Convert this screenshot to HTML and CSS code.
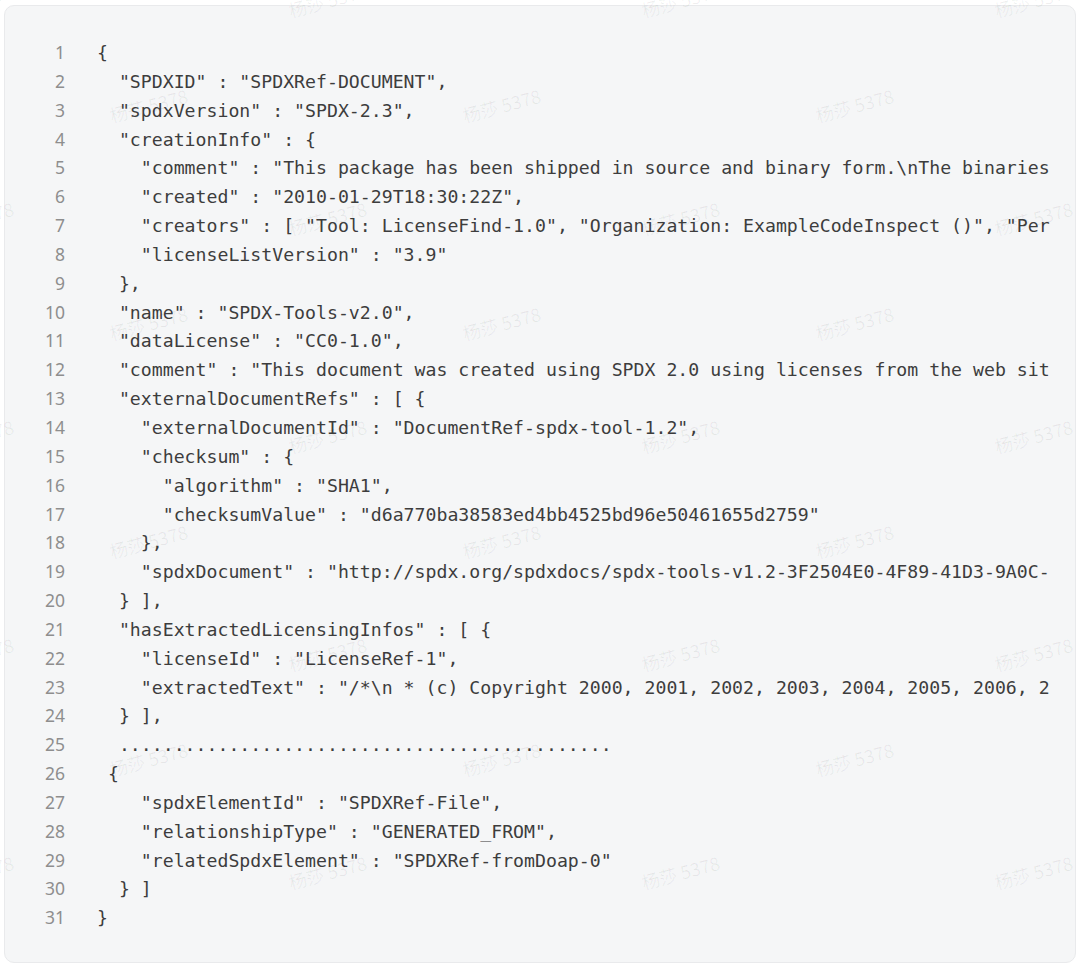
FILE: index.html
```html
<!DOCTYPE html>
<html lang="zh-CN">
<head>
<meta charset="utf-8">
<title>SPDX JSON</title>
<link rel="stylesheet" href="styles.css">
</head>
<body>
<div class="code-block">
  <div class="line"><span class="ln">1</span><span class="code">{</span></div>
  <div class="line"><span class="ln">2</span><span class="code">  "SPDXID" : "SPDXRef-DOCUMENT",</span></div>
  <div class="line"><span class="ln">3</span><span class="code">  "spdxVersion" : "SPDX-2.3",</span></div>
  <div class="line"><span class="ln">4</span><span class="code">  "creationInfo" : {</span></div>
  <div class="line"><span class="ln">5</span><span class="code">    "comment" : "This package has been shipped in source and binary form.\nThe binaries</span></div>
  <div class="line"><span class="ln">6</span><span class="code">    "created" : "2010-01-29T18:30:22Z",</span></div>
  <div class="line"><span class="ln">7</span><span class="code">    "creators" : [ "Tool: LicenseFind-1.0", "Organization: ExampleCodeInspect ()", "Per</span></div>
  <div class="line"><span class="ln">8</span><span class="code">    "licenseListVersion" : "3.9"</span></div>
  <div class="line"><span class="ln">9</span><span class="code">  },</span></div>
  <div class="line"><span class="ln">10</span><span class="code">  "name" : "SPDX-Tools-v2.0",</span></div>
  <div class="line"><span class="ln">11</span><span class="code">  "dataLicense" : "CC0-1.0",</span></div>
  <div class="line"><span class="ln">12</span><span class="code">  "comment" : "This document was created using SPDX 2.0 using licenses from the web sit</span></div>
  <div class="line"><span class="ln">13</span><span class="code">  "externalDocumentRefs" : [ {</span></div>
  <div class="line"><span class="ln">14</span><span class="code">    "externalDocumentId" : "DocumentRef-spdx-tool-1.2",</span></div>
  <div class="line"><span class="ln">15</span><span class="code">    "checksum" : {</span></div>
  <div class="line"><span class="ln">16</span><span class="code">      "algorithm" : "SHA1",</span></div>
  <div class="line"><span class="ln">17</span><span class="code">      "checksumValue" : "d6a770ba38583ed4bb4525bd96e50461655d2759"</span></div>
  <div class="line"><span class="ln">18</span><span class="code">    },</span></div>
  <div class="line"><span class="ln">19</span><span class="code">    "spdxDocument" : "http://spdx.org/spdxdocs/spdx-tools-v1.2-3F2504E0-4F89-41D3-9A0C-</span></div>
  <div class="line"><span class="ln">20</span><span class="code">  } ],</span></div>
  <div class="line"><span class="ln">21</span><span class="code">  "hasExtractedLicensingInfos" : [ {</span></div>
  <div class="line"><span class="ln">22</span><span class="code">    "licenseId" : "LicenseRef-1",</span></div>
  <div class="line"><span class="ln">23</span><span class="code">    "extractedText" : "/*\n * (c) Copyright 2000, 2001, 2002, 2003, 2004, 2005, 2006, 2</span></div>
  <div class="line"><span class="ln">24</span><span class="code">  } ],</span></div>
  <div class="line"><span class="ln">25</span><span class="code">  .............................................</span></div>
  <div class="line"><span class="ln">26</span><span class="code"> {</span></div>
  <div class="line"><span class="ln">27</span><span class="code">    "spdxElementId" : "SPDXRef-File",</span></div>
  <div class="line"><span class="ln">28</span><span class="code">    "relationshipType" : "GENERATED_FROM",</span></div>
  <div class="line"><span class="ln">29</span><span class="code">    "relatedSpdxElement" : "SPDXRef-fromDoap-0"</span></div>
  <div class="line"><span class="ln">30</span><span class="code">  } ]</span></div>
  <div class="line"><span class="ln">31</span><span class="code">}</span></div>
</div>

<div class="wm-layer" aria-hidden="true">
  <div class="wm-row b first"><span class="wm">杨莎 5378</span><span class="wm">杨莎 5378</span><span class="wm">杨莎 5378</span><span class="wm">杨莎 5378</span></div>
  <div class="wm-row a"><span class="wm">杨莎 5378</span><span class="wm">杨莎 5378</span><span class="wm">杨莎 5378</span><span class="wm">杨莎 5378</span></div>
  <div class="wm-row b"><span class="wm">杨莎 5378</span><span class="wm">杨莎 5378</span><span class="wm">杨莎 5378</span><span class="wm">杨莎 5378</span></div>
  <div class="wm-row a"><span class="wm">杨莎 5378</span><span class="wm">杨莎 5378</span><span class="wm">杨莎 5378</span><span class="wm">杨莎 5378</span></div>
  <div class="wm-row b"><span class="wm">杨莎 5378</span><span class="wm">杨莎 5378</span><span class="wm">杨莎 5378</span><span class="wm">杨莎 5378</span></div>
  <div class="wm-row a"><span class="wm">杨莎 5378</span><span class="wm">杨莎 5378</span><span class="wm">杨莎 5378</span><span class="wm">杨莎 5378</span></div>
  <div class="wm-row b"><span class="wm">杨莎 5378</span><span class="wm">杨莎 5378</span><span class="wm">杨莎 5378</span><span class="wm">杨莎 5378</span></div>
  <div class="wm-row a"><span class="wm">杨莎 5378</span><span class="wm">杨莎 5378</span><span class="wm">杨莎 5378</span><span class="wm">杨莎 5378</span></div>
  <div class="wm-row b"><span class="wm">杨莎 5378</span><span class="wm">杨莎 5378</span><span class="wm">杨莎 5378</span><span class="wm">杨莎 5378</span></div>
</div>
</body>
</html>
```
FILE: styles.css
```css
html, body {
  margin: 0;
  padding: 0;
  background: #ffffff;
  overflow: hidden;
}

body {
  position: relative;
  width: 1080px;
  height: 968px;
}

.code-block {
  margin: 5px 4px 0 4px;
  box-sizing: border-box;
  height: 958px;
  padding: 32px 0 0 0;
  background: #f5f6f7;
  border: 1px solid #e9eaec;
  border-radius: 10px;
  overflow: hidden;
}

.line {
  display: flex;
  align-items: baseline;
  height: 28.85px;
  line-height: 28.85px;
}

.ln {
  flex: 0 0 60px;
  text-align: right;
  font-family: "Noto Sans", "Open Sans", sans-serif;
  font-size: 17.5px;
  color: #8e8e8e;
}

.code {
  margin-left: 32px;
  width: 954px;
  overflow: hidden;
  white-space: pre;
  font-family: "DejaVu Sans Mono", "Liberation Mono", monospace;
  font-size: 18.2px;
  color: #3d3d3d;
}

.wm-layer {
  position: absolute;
  left: 0;
  top: 0;
  width: 1080px;
  height: 968px;
  overflow: hidden;
  pointer-events: none;
}

.wm-row {
  display: flex;
  align-items: center;
  height: 109px;
  width: 1800px;
}

.wm-row.first {
  margin-top: -55px;
}

.wm-row.b {
  margin-left: -202px;
}

.wm-row.a {
  margin-left: -28px;
}

.wm {
  flex: 0 0 353px;
  text-align: center;
  white-space: nowrap;
  font-family: "Noto Sans CJK SC", "Noto Sans", sans-serif;
  font-size: 18px;
  color: rgba(0, 0, 0, 0.06);
  transform: rotate(-15deg);
}

.wm-row.a .wm {
  transform: translateY(-4px) rotate(-15deg);
}
```
